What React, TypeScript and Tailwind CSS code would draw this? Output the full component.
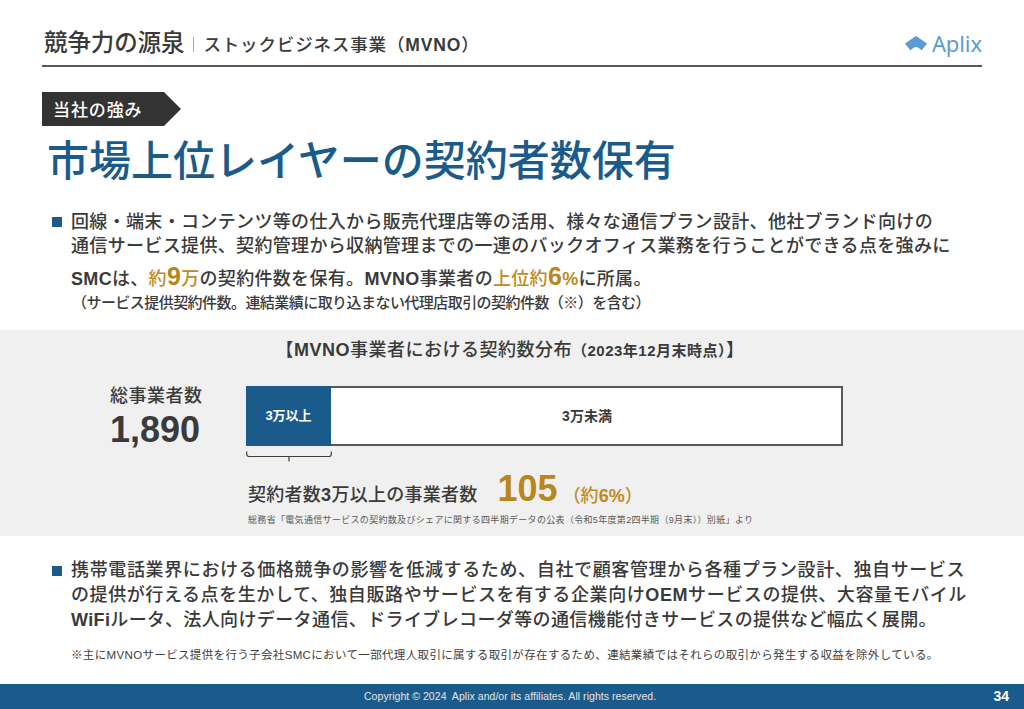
const font = "[font-family:'Liberation_Sans','Noto_Sans_CJK_JP',sans-serif]";

function Logo() {
  return (
    <div className="flex items-center gap-[5px] text-[#5b9bd5] font-normal mb-[4px]">
      <svg width="22" height="15" viewBox="0 0 22 15"><path d="M11 0 L22 7.5 L16.5 14.5 Q13.5 11 11 11 Q8.5 11 5.5 14.5 L0 7.5 Z" fill="#5b9bd5" /></svg>
      <span className="text-[22px] leading-[28px] -tracking-[0.1px] [font-family:'Noto_Sans',sans-serif]">Aplix</span>
    </div>
  );
}

function L({ children }: { children: React.ReactNode }) {
  return <span className="font-bold">{children}</span>;
}

function Gold({ children }: { children: React.ReactNode }) {
  return <span className="text-[#c08a1e]">{children}</span>;
}

function BigGold({ children }: { children: React.ReactNode }) {
  return <span className="text-[#b8861b] text-[25px] leading-[24px] font-bold">{children}</span>;
}

export default function App() {
  return (
    <div className={`w-[1024px] h-[709px] bg-white flex flex-col overflow-hidden text-[#3a3a3a] font-medium ${font}`}>
      <header className="mx-[42px] h-[67px] border-b-2 border-[#595959] flex items-end justify-between pb-[4px]">
        <div className="flex items-center pl-[2px]">
          <span className="text-[23.5px] leading-[32px] tracking-[-0.1px]">競争力の源泉</span>
          <span className="w-px h-[15px] bg-[#a6a6a6] mx-[9px] mt-[3px]" />
          <span className="text-[17.5px] leading-[32px] tracking-[0.85px] mt-[4px]">ストックビジネス事業（<L>MVNO</L>）</span>
        </div>
        <Logo />
      </header>

      <div className="mx-[42px] mt-[25px] w-[139px] h-[34px] pt-[3px] bg-[#333333] [clip-path:polygon(0_0,122px_0,100%_50%,122px_100%,0_100%)] text-white flex items-center pl-[11px] text-[17px] tracking-[0.9px]">
        当社の強み
      </div>

      <h1 className="mx-[47px] mt-[9px] text-[#1b5b8c] text-[42px] leading-[54px] font-medium">市場上位レイヤーの契約者数保有</h1>

      <section className="mx-[52px] mt-[21px]">
        <div className="flex">
          <span className="w-[10px] h-[10px] bg-[#1b5b8c] mt-[7px] mr-[9px] shrink-0" />
          <div className="text-[18px] leading-[24px] tracking-[0.34px] whitespace-nowrap">
            <p>回線・端末・コンテンツ等の仕入から販売代理店等の活用、様々な通信プラン設計、他社ブランド向けの</p>
            <p>通信サービス提供、契約管理から収納管理までの一連のバックオフィス業務を行うことができる点を強みに</p>
            <p className="leading-[36px] tracking-[0.32px] mt-[3px]">
              <L>SMC</L>は、<Gold>約<BigGold>9</BigGold>万</Gold>の契約件数を保有。<L>MVNO</L>事業者の<Gold>上位約<BigGold>6</BigGold><L>%</L></Gold>に所属。
            </p>
            <p className="text-[15px] leading-[20px] tracking-[-0.55px] pl-[1px] -mt-[4px]">（サービス提供契約件数。連結業績に取り込まない代理店取引の契約件数（※）を含む）</p>
          </div>
        </div>
      </section>

      <section className="mt-[17px] h-[206px] bg-[#f0f0f0] flex flex-col">
        <h2 className="text-center text-[18px] leading-[24px] mt-[8px] tracking-[0.5px] pr-[4px]">
          【<L>MVNO</L>事業者における契約数分布<span className="text-[15px] tracking-[0.5px] font-bold">（2023年12月末時点）</span>】
        </h2>
        <div className="flex mt-[23px]">
          <div className="w-[246px] pl-[110px] flex flex-col items-start">
            <span className="text-[18px] leading-[24px] tracking-[0.5px] -mt-[2px]">総事業者数</span>
            <span className="text-[36px] leading-[46px] font-bold -mt-[1px]">1,890</span>
          </div>
          <div className="w-[597px]">
            <div className="h-[60px] border-2 border-[#595959] flex bg-white">
              <div className="w-[85px] -my-[2px] -ml-[2px] bg-[#1b5b8c] text-white text-[13px] font-bold flex items-center justify-center">3万以上</div>
              <div className="flex-1 flex items-center justify-center text-[14px] font-bold pl-[2px]">3万未満</div>
            </div>
            <svg className="mt-[5px] block" width="86" height="11" viewBox="0 0 86 11"><path d="M0.7 0.5 V3 Q0.7 5.5 3 5.5 H83 Q85.3 5.5 85.3 3 V0.5 M43 5.5 V10.5" stroke="#404040" strokeWidth="1.2" fill="none" /></svg>
            <div className="flex items-end mt-[7px] pl-[2px] whitespace-nowrap">
              <span className="text-[18px] leading-[30px] tracking-[0.27px] mb-[1px]">契約者数<L>3</L>万以上の事業者数</span>
              <span className="text-[#b8861b] text-[36px] leading-[40px] ml-[20px] mb-[2px] font-bold">105</span>
              <span className="text-[#c08a1e] text-[18px] leading-[28px] ml-[5px] mb-[1px]">（約<L>6%</L>）</span>
            </div>
            <p className="text-[9px] leading-[12px] font-normal text-[#595959] whitespace-nowrap pl-[2px] tracking-[0.32px] mt-[3px]">総務省「電気通信サービスの契約数及びシェアに関する四半期データの公表（令和5年度第2四半期（9月末））別紙」より</p>
          </div>
        </div>
      </section>

      <section className="mx-[52px] mt-[22px] flex">
        <span className="w-[10px] h-[10px] bg-[#1b5b8c] mt-[8px] mr-[9px] shrink-0" />
        <div className="text-[18px] leading-[25px] whitespace-nowrap">
          <p className="tracking-[0.63px]">携帯電話業界における価格競争の影響を低減するため、自社で顧客管理から各種プラン設計、独自サービス</p>
          <p className="tracking-[0.59px]">の提供が行える点を生かして、独自販路やサービスを有する企業向け<L>OEM</L>サービスの提供、大容量モバイル</p>
          <p className="tracking-[0.38px]"><L>WiFi</L>ルータ、法人向けデータ通信、ドライブレコーダ等の通信機能付きサービスの提供など幅広く展開。</p>
        </div>
      </section>

      <p className="mx-[71px] mt-[14px] text-[11.5px] leading-[16px] font-normal text-[#404040] tracking-[0.35px] whitespace-nowrap">※主にMVNOサービス提供を行う子会社SMCにおいて一部代理人取引に属する取引が存在するため、連結業績ではそれらの取引から発生する収益を除外している。</p>

      <footer className="mt-auto h-[25px] bg-[#1b5b8c] flex items-center text-white relative">
        <span className="ml-[364px] text-[10.5px] tracking-[0.04px] font-normal text-[#e5e5e5] whitespace-pre">Copyright © 2024  Aplix and/or its affiliates. All rights reserved.</span>
        <span className="absolute right-[15px] text-[14px] font-bold">34</span>
      </footer>
    </div>
  );
}
